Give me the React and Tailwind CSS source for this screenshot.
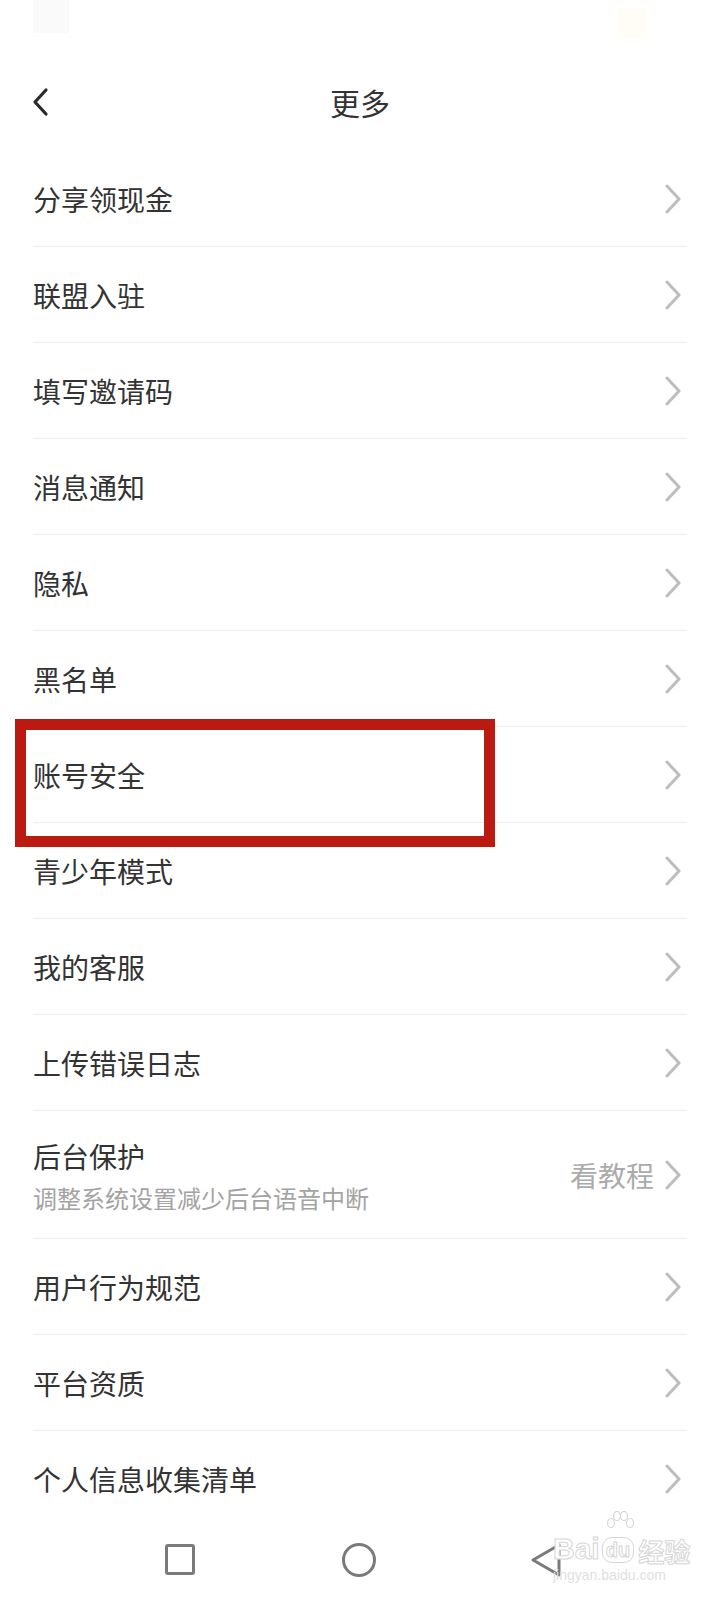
import React from "react";

const Chevron = () => (
  <svg width="18" height="30" viewBox="0 0 18 30" fill="none" className="shrink-0">
    <path d="M3 2 L15 15 L3 28" stroke="#bdbdbd" strokeWidth="3" strokeLinecap="round" strokeLinejoin="round" />
  </svg>
);

const items = [
  "分享领现金",
  "联盟入驻",
  "填写邀请码",
  "消息通知",
  "隐私",
  "黑名单",
  "账号安全",
  "青少年模式",
  "我的客服",
  "上传错误日志",
];

const items2 = ["用户行为规范", "平台资质"];

function Row({ label, last }) {
  return (
    <div className={"h-[96px] flex items-center justify-between " + (last ? "" : "border-b border-[#eeeeee]")}>
      <span className="text-[28px] leading-none text-[#333333]">{label}</span>
      <div className="pr-[5px]"><Chevron /></div>
    </div>
  );
}

export default function App() {
  return (
    <div
      className="relative w-[720px] h-[1600px] bg-white overflow-hidden flex flex-col"
      style={{ fontFamily: '"Noto Sans CJK SC", "Noto Sans", sans-serif' }}
    >
      {/* status bar */}
      <div className="h-[52px] flex items-start justify-between px-[33px]">
        <div className="w-[36px] h-[33px] bg-[#fafafa]" />
        <div className="w-[30px] h-[30px] mt-[8px] mr-[40px] bg-[#fffdf5]" />
      </div>

      {/* header */}
      <div className="relative h-[99px] flex items-center justify-center">
        <div className="absolute left-[32px] top-0 bottom-0 flex items-center">
          <svg width="18" height="30" viewBox="0 0 18 30" fill="none">
            <path d="M14 3 L3 15 L14 27" stroke="#2a2a2a" strokeWidth="3.2" strokeLinecap="round" strokeLinejoin="round" />
          </svg>
        </div>
        <span className="text-[30px] leading-none text-[#333333]">更多</span>
      </div>

      {/* list */}
      <div className="px-[33px] flex flex-col">
        {items.map((t) => (
          <Row key={t} label={t} />
        ))}
        <div className="h-[128px] flex items-center justify-between border-b border-[#eeeeee]">
          <div className="flex flex-col gap-[16px] pt-[2px]">
            <span className="text-[28px] leading-none text-[#333333]">后台保护</span>
            <span className="text-[24px] leading-none text-[#a3a3a3]">调整系统设置减少后台语音中断</span>
          </div>
          <div className="flex items-center gap-[10px] pr-[5px]">
            <span className="text-[28px] leading-none text-[#ababab]">看教程</span>
            <Chevron />
          </div>
        </div>
        {items2.map((t) => (
          <Row key={t} label={t} />
        ))}
        <Row label="个人信息收集清单" last />
      </div>

      {/* nav bar */}
      <div className="flex-1 flex items-center pb-[8px]">
        <div className="ml-[165px] w-[30px] h-[31px] border-[3px] border-[#7a7a7a] rounded-[3px]" />
        <div className="ml-[147px] w-[34px] h-[34px] border-[3px] border-[#7a7a7a] rounded-full" />
        <svg className="ml-[154px]" width="32" height="36" viewBox="0 0 32 36" fill="none">
          <path d="M29 3 L3 18 L29 33 Z" stroke="#7a7a7a" strokeWidth="3" strokeLinejoin="round" />
        </svg>
      </div>

      {/* baidu watermark */}
      <div
        className="absolute left-[553px] top-[1520px] flex flex-col items-start pointer-events-none"
        style={{ fontFamily: '"Liberation Sans", sans-serif' }}
      >
        <div className="relative flex items-end h-[44px]">
          <span className="text-[30px] leading-none font-bold text-white [-webkit-text-stroke:1px_#d6d6d6]">Bai</span>
          <div className="relative ml-[2px] mb-[1px]">
            <svg className="absolute left-[2px] -top-[26px]" width="32" height="28" viewBox="0 0 32 28" fill="white" stroke="#d6d6d6" strokeWidth="1.2">
              <ellipse cx="7" cy="12" rx="3.5" ry="4.5" />
              <ellipse cx="13" cy="5" rx="3.5" ry="4.5" />
              <ellipse cx="20" cy="5" rx="3.5" ry="4.5" />
              <ellipse cx="26" cy="12" rx="3.5" ry="4.5" />
            </svg>
            <div className="h-[26px] px-[3px] rounded-[10px] border border-[#d6d6d6] bg-white flex items-center">
              <span className="text-[20px] leading-none font-bold text-white [-webkit-text-stroke:1px_#d6d6d6]">du</span>
            </div>
          </div>
          <span
            className="ml-[4px] text-[26px] leading-none font-bold text-white [-webkit-text-stroke:1px_#d6d6d6]"
            style={{ fontFamily: '"Noto Sans CJK SC", sans-serif' }}
          >
            经验
          </span>
        </div>
        <span className="text-[14px] leading-none text-[#e0e0e0] mt-[4px]">jingyan.baidu.com</span>
      </div>

      {/* red annotation box */}
      <div className="absolute left-[15px] top-[719px] w-[480px] h-[128px] border-[11px] border-[#bb1a10]" />
    </div>
  );
}
